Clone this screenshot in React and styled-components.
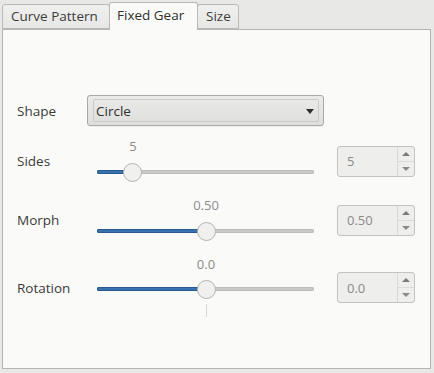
import React from "react";
import styled, { createGlobalStyle } from "styled-components";

const Global = createGlobalStyle`
  html, body { margin: 0; padding: 0; background: #e8e8e6; }
  body { font-family: "Open Sans", "DejaVu Sans", sans-serif; font-size: 13px; color: #3a3a3a; }
`;

const Window = styled.div`
  width: 434px;
  height: 373px;
  box-sizing: border-box;
  padding: 2px 3px 4px 2px;
  background: #e8e8e6;
`;

const TabBar = styled.div`
  display: flex;
  align-items: flex-end;
  height: 27px;
`;

const Tab = styled.div`
  box-sizing: border-box;
  width: ${(p) => p.$w}px;
  height: ${(p) => (p.$active ? 28 : 25)}px;
  margin-left: ${(p) => (p.$first ? 0 : -1)}px;
  margin-bottom: ${(p) => (p.$active ? -1 : 0)}px;
  position: relative;
  z-index: ${(p) => (p.$active ? 2 : 1)};
  display: flex;
  align-items: center;
  padding: 0 0 ${(p) => (p.$active ? 3 : 1)}px ${(p) => (p.$active ? 7 : 8)}px;
  border: 1px solid #b9b9b7;
  border-bottom: ${(p) => (p.$active ? "none" : "1px solid #b9b9b7")};
  border-radius: 3px 3px 0 0;
  background: ${(p) =>
    p.$active ? "#fafbf9" : "linear-gradient(#f0f0ee, #e6e6e4)"};
  color: ${(p) => (p.$active ? "#2f2f2f" : "#3c3c3c")};
  font-size: 13.5px;
  white-space: nowrap;
`;

const Panel = styled.div`
  box-sizing: border-box;
  width: 429px;
  height: 340px;
  border: 1px solid #b5b5b3;
  background: #fafbf9;
  padding: 65px 15px 0 14px;
  display: flex;
  flex-direction: column;
`;

const Row = styled.div`
  display: grid;
  grid-template-columns: 70px 237px 91px;
  align-items: center;
  margin-top: ${(p) => p.$mt || 0}px;
`;

const Label = styled.div`
  color: #3a3a3a;
  font-size: 13.5px;
`;

const Combo = styled.div`
  box-sizing: border-box;
  height: 31px;
  border: 1px solid #a8a8a6;
  border-radius: 3px;
  background: linear-gradient(#eaeae8, #dededc);
  padding: 3px 4px 3px 5px;
  box-shadow: 0 1px 0 rgba(0, 0, 0, 0.04);
`;

const ComboInner = styled.div`
  box-sizing: border-box;
  height: 100%;
  border: 1px solid #cbcbc9;
  border-radius: 2px;
  display: flex;
  align-items: center;
  justify-content: space-between;
  padding: 0 4px 0 2px;
  color: #2f2f2f;
  font-size: 13.5px;
`;

const DownArrow = styled.span`
  width: 0;
  height: 0;
  border-left: 4.5px solid transparent;
  border-right: 4.5px solid transparent;
  border-top: 5px solid #2e2e2e;
  margin-top: 1px;
`;

const SliderGroup = styled.div`
  position: relative;
  height: ${(p) => (p.$ticks ? 61 : 44)}px;
  margin: 0 10px;
`;

const ValueText = styled.div`
  position: absolute;
  top: 0;
  line-height: 14px;
  transform: translateX(-50%);
  color: #8a8a8a;
  font-size: 13px;
`;

const Track = styled.div`
  position: absolute;
  left: 0;
  right: 0;
  top: ${(p) => p.$y - 2}px;
  height: 4px;
  border-radius: 2px;
  background: #c9c9c7;
  box-shadow: inset 0 0 0 1px #bdbdbb;
`;

const Fill = styled.div`
  position: absolute;
  left: 0;
  top: ${(p) => p.$y - 2}px;
  height: 4px;
  border-radius: 2px;
  background: #3a72ad;
  box-shadow: inset 0 0 0 1px #28598f;
`;

const Handle = styled.div`
  position: absolute;
  top: ${(p) => p.$y - 9.5}px;
  width: 19px;
  height: 19px;
  margin-left: -9.5px;
  box-sizing: border-box;
  border-radius: 50%;
  background: #f0f0ee;
  border: 1px solid #b4b4b2;
`;

const Tick = styled.div`
  position: absolute;
  top: ${(p) => p.$y + 15}px;
  width: 1px;
  height: 13px;
  background: #d6d6d4;
`;

const Spin = styled.div`
  box-sizing: border-box;
  height: 31px;
  margin-left: 13px;
  display: flex;
  border: 1px solid #c3c3c1;
  border-radius: 3px;
  background: #eeeeec;
  overflow: hidden;
`;

const SpinText = styled.div`
  flex: 1;
  display: flex;
  align-items: center;
  padding-left: 9px;
  color: #8a8a8a;
`;

const SpinButtons = styled.div`
  width: 16px;
  display: flex;
  flex-direction: column;
  border-left: 1px solid #d9d9d7;
`;

const SpinBtn = styled.div`
  flex: 1;
  display: flex;
  align-items: center;
  justify-content: center;
  border-top: ${(p) => (p.$down ? "1px solid #dcdcda" : "none")};
`;

const Tri = styled.span`
  width: 0;
  height: 0;
  border-left: 4px solid transparent;
  border-right: 4px solid transparent;
  ${(p) =>
    p.$down
      ? "border-top: 4px solid #8a8a8a;"
      : "border-bottom: 4px solid #7a7a7a;"}
`;

function Slider({ frac, value, ticks }) {
  const y = ticks ? 32 : 33;
  const pct = `${frac * 100}%`;
  return (
    <SliderGroup $ticks={ticks}>
      <ValueText style={{ left: pct }}>{value}</ValueText>
      <Track $y={y} />
      <Fill $y={y} style={{ width: pct }} />
      <Handle $y={y} style={{ left: pct }} />
      {ticks && <Tick $y={y} style={{ left: pct }} />}
    </SliderGroup>
  );
}

function SpinBox({ value }) {
  return (
    <Spin>
      <SpinText>{value}</SpinText>
      <SpinButtons>
        <SpinBtn>
          <Tri />
        </SpinBtn>
        <SpinBtn $down>
          <Tri $down />
        </SpinBtn>
      </SpinButtons>
    </Spin>
  );
}

export default function App() {
  return (
    <>
      <Global />
      <Window>
        <TabBar>
          <Tab $w={108} $first>Curve Pattern</Tab>
          <Tab $w={89} $active>Fixed Gear</Tab>
          <Tab $w={42}>Size</Tab>
        </TabBar>
        <Panel>
          <Row>
            <Label>Shape</Label>
            <Combo>
              <ComboInner>
                <span>Circle</span>
                <DownArrow />
              </ComboInner>
            </Combo>
          </Row>
          <Row $mt={13}>
            <Label>Sides</Label>
            <Slider frac={36 / 217} value="5" />
            <SpinBox value="5" />
          </Row>
          <Row $mt={15}>
            <Label>Morph</Label>
            <Slider frac={109 / 217} value="0.50" />
            <SpinBox value="0.50" />
          </Row>
          <Row $mt={15}>
            <Label>Rotation</Label>
            <Slider frac={109 / 217} value="0.0" ticks />
            <SpinBox value="0.0" />
          </Row>
        </Panel>
      </Window>
    </>
  );
}
